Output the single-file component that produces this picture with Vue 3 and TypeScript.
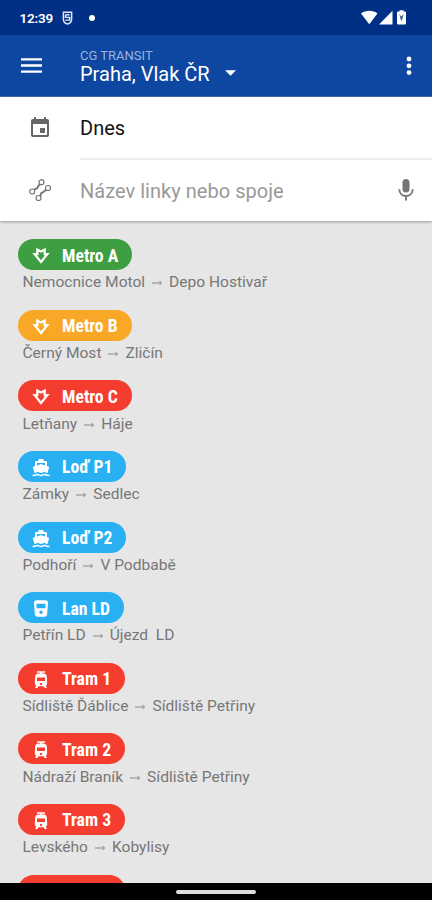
<script setup lang="ts">
type Kind = 'metro' | 'ferry' | 'cable' | 'tram'

interface Line {
  name: string
  from: string
  to: string
  kind: Kind
  color: string
}

const lines: Line[] = [
  { name: 'Metro A', from: 'Nemocnice Motol', to: 'Depo Hostivař', kind: 'metro', color: 'green' },
  { name: 'Metro B', from: 'Černý Most', to: 'Zličín', kind: 'metro', color: 'orange' },
  { name: 'Metro C', from: 'Letňany', to: 'Háje', kind: 'metro', color: 'red' },
  { name: 'Loď P1', from: 'Zámky', to: 'Sedlec', kind: 'ferry', color: 'blue' },
  { name: 'Loď P2', from: 'Podhoří', to: 'V Podbabě', kind: 'ferry', color: 'blue' },
  { name: 'Lan LD', from: 'Petřín LD', to: 'Újezd  LD', kind: 'cable', color: 'blue' },
  { name: 'Tram 1', from: 'Sídliště Ďáblice', to: 'Sídliště Petřiny', kind: 'tram', color: 'red' },
  { name: 'Tram 2', from: 'Nádraží Braník', to: 'Sídliště Petřiny', kind: 'tram', color: 'red' },
  { name: 'Tram 3', from: 'Levského', to: 'Kobylisy', kind: 'tram', color: 'red' },
]
</script>

<template>
  <div class="screen">
    <div class="status">
      <span class="clock">12:39</span>
      <svg class="shield" viewBox="0 0 12 15">
        <path d="M1.500 1.200h9v7.600c0 3-2 4.600-4.500 5.200-2.500-.6-4.500-2.200-4.500-5.200z M3.800 4h4.500M3.800 4v2.800h4.500v3H3.600" />
      </svg>
      <span class="dot"></span>
      <svg class="signals" viewBox="0 0 46 16">
        <path d="M0 3.500C4.500-.2 12-.2 16.500 3.500L8.250 14.200z" />
        <path d="M31.500 .8v13.700H18z" />
        <path d="M37 1.500h1.500V.3h4v1.200H44q1 0 1 1v11q0 1-1 1h-7q-1 0-1-1v-11q0-1 1-1z" />
        <path class="bolt" d="M38.300 4l2 2.500L42.600 4l-1.600 6.500h-1z" />
      </svg>
    </div>

    <header class="toolbar">
      <svg class="menu" viewBox="0 0 21 15"><path d="M0 1.400h21M0 7.500h21M0 13.600h21" /></svg>
      <div class="titles">
        <div class="app-name">CG TRANSIT</div>
        <div class="region">
          <span>Praha, Vlak ČR</span>
          <svg class="caret" viewBox="0 0 12 6"><path d="M0 0h12L6 6z" /></svg>
        </div>
      </div>
      <svg class="more" viewBox="0 0 6 20">
        <circle cx="3" cy="3" r="2.400" /><circle cx="3" cy="9.800" r="2.400" /><circle cx="3" cy="16.600" r="2.400" />
      </svg>
    </header>

    <section class="search">
      <div class="field">
        <svg class="field-icon" viewBox="0 0 24 24">
          <path fill="#666" d="M17 12h-5v5h5zM16 1v2H8V1H6v2H5a2 2 0 0 0-2 2v14a2 2 0 0 0 2 2h14a2 2 0 0 0 2-2V5a2 2 0 0 0-2-2h-1V1zm3 18H5V8h14z" />
        </svg>
        <span class="value">Dnes</span>
      </div>
      <div class="field">
        <svg class="field-icon" viewBox="0 0 24 24">
          <g fill="none" stroke="#777" stroke-width="1.200">
            <circle cx="4.200" cy="13.500" r="2.500" /><circle cx="13.500" cy="4.200" r="2.500" />
            <circle cx="10.500" cy="20" r="2.500" /><circle cx="20" cy="10" r="2.500" />
            <path stroke-width="2" d="M6 11.700L9 10.300L10.500 7.800L11.900 6M12.200 18.200L13.300 15.200L16 13.500L18.200 11.800" />
          </g>
        </svg>
        <span class="hint">Název linky nebo spoje</span>
        <svg class="mic" viewBox="0 0 16 22">
          <rect x="4.500" y="0" width="7" height="13.500" rx="3.500" fill="#757575" />
          <path d="M1.300 10.200c0 9 13.400 9 13.400 0M8 17v4.500" fill="none" stroke="#757575" stroke-width="1.900" />
        </svg>
      </div>
    </section>

    <main class="list">
      <div v-for="line in lines" :key="line.name" class="row">
        <div class="pill" :class="[line.color, line.kind]">
          <svg v-if="line.kind === 'metro'" class="glyph" viewBox="0 0 18 18">
            <path d="M4.200 .8L9 3.200 13.800 .8V6H17.700L9 16.700 .3 6H4.200zM6.500 4.500V8.200H5L9 13.200 13 8.200H11.500V4.500L9 5.800z" fill="#fff" fill-rule="evenodd" />
          </svg>
          <svg v-else-if="line.kind === 'ferry'" class="glyph" viewBox="0 0 18 18">
            <path d="M6.500 0h5v2H14q1 0 1 1v4l2.200 1-1.700 6q-1.500 0-3-1.200Q9 15 5.500 12.800 4 14 2.500 14L.8 8 3 7V3q0-1 1-1h2.500zM5 4v2.400L9 5l4 1.400V4z" fill="#fff" fill-rule="evenodd" />
            <path d="M.5 16.600q2.500 0 5-1.200 3.500 2 7 0 2.500 1.200 5 1.200" fill="none" stroke="#fff" stroke-width="1.500" />
          </svg>
          <svg v-else-if="line.kind === 'cable'" class="glyph" viewBox="0 0 18 18">
            <path d="M4.500 .3h9q2.500 0 2.500 2.500L15.200 13.800q-.2 3-3 3H5.800q-2.800 0-3-3L2 2.800Q2 .3 4.500 .3zM4.500 3.800v4.500h9V3.800zM9 10.500a1.700 1.700 0 1 0 .01 0z" fill="#fff" fill-rule="evenodd" />
          </svg>
          <svg v-else class="glyph" viewBox="0 0 18 18">
            <path d="M5 .9h8M9 1v3" stroke="#fff" stroke-width="1.500" />
            <path d="M6.500 2.600h5q3 0 3.300 2.900l.4 6.500q0 2-1.500 2.700l1.300 2.300h-2.300L11.600 15.200H6.400L5.300 17H3L4.300 14.700q-1.500-.7-1.500-2.700L3.200 5.500q.3-2.900 3.300-2.900zM5 6.500V10h8V6.500zM9 11.800a1.200 1.200 0 1 0 .01 0z" fill="#fff" fill-rule="evenodd" />
          </svg>
          <span class="line-name">{{ line.name }}</span>
        </div>
        <div class="route">
          <span>{{ line.from }}</span>
          <svg class="arrow" viewBox="0 0 11 6"><path d="M0 3h9.500M7.500 1l2 2-2 2" /></svg>
          <span>{{ line.to }}</span>
        </div>
      </div>
      <div class="pill tram red"></div>
    </main>

    <footer class="navbar"><span class="handle"></span></footer>
  </div>
</template>

<style>
body {
  margin: 0;
}
</style>

<style scoped>
.screen {
  display: flex;
  flex-direction: column;
  width: 432px;
  height: 900px;
  overflow: hidden;
  background: #e6e6e6;
  font-family: Roboto, "Noto Sans", sans-serif;
}
svg {
  display: block;
  flex: none;
}
.status {
  display: flex;
  align-items: center;
  flex: none;
  box-sizing: border-box;
  height: 35px;
  padding: 0 25px 0 19.500px;
  background: #002f86;
  color: #fff;
}
.clock {
  width: 42.500px;
  font-size: 13.500px;
  font-weight: 600;
  letter-spacing: -0.2px;
}
.shield {
  width: 11px;
  height: 14px;
  margin-top: 1px;
  fill: none;
  stroke: #dfe6f7;
  stroke-width: 1.6;
}
.dot {
  width: 6px;
  height: 6px;
  margin-left: 16px;
  border-radius: 50%;
  background: #fff;
}
.signals {
  width: 46px;
  height: 16px;
  margin-left: auto;
  fill: #fff;
}
.signals .bolt {
  fill: #466080;
}
.toolbar {
  display: flex;
  flex: none;
  box-sizing: border-box;
  height: 62px;
  padding: 0 20px 0 21px;
  background: #0d47a1;
  border-bottom: 1px solid #4267b8;
  color: #fff;
}
.menu {
  width: 21px;
  height: 15px;
  margin-top: 23px;
  stroke: #fff;
  stroke-width: 2.4;
}
.titles {
  flex: 1;
  padding: 13px 0 0 38px;
}
.app-name {
  color: #9db3dc;
  font-size: 13px;
  line-height: 15px;
}
.region {
  display: flex;
  align-items: center;
  gap: 15px;
  font-size: 20px;
  line-height: 22px;
}
.caret {
  width: 11px;
  height: 6px;
  margin-top: -2px;
  fill: #fff;
}
.more {
  width: 6px;
  height: 20px;
  margin-top: 21px;
  fill: #fff;
}
.search {
  flex: none;
  height: 124px;
  background: #fff;
  box-shadow: 0 1px 3px #0005;
}
.field {
  display: flex;
  align-items: center;
  height: 62px;
  padding: 0 18px 0 28px;
  font-size: 20px;
}
.field-icon {
  width: 24px;
  height: 24px;
}
.value,
.hint {
  display: flex;
  align-items: center;
  flex: 1;
  box-sizing: border-box;
  height: 63px;
  margin-left: 28px;
  padding-top: 2px;
}
.value {
  margin-right: -18px;
  border-bottom: 2px solid #eee;
  padding-top: 1px;
  color: #111;
}
.hint {
  color: #999;
  letter-spacing: 0.03px;
}
.mic {
  width: 16px;
  height: 22px;
}
.list {
  flex: 1;
  min-height: 0;
  overflow: hidden;
  padding: 18.300px 0 0 18px;
}
.row {
  height: 70.600px;
}
.pill {
  display: flex;
  align-items: center;
  box-sizing: border-box;
  width: 113.500px;
  height: 31px;
  padding-left: 14px;
  border-radius: 16px;
  color: #fff;
}
.pill.ferry {
  width: 108px;
}
.pill.cable {
  width: 105.500px;
}
.pill.tram {
  width: 107px;
}
.green {
  background: #3d9f42;
}
.orange {
  background: #f9a726;
}
.red {
  background: #f53d2f;
}
.blue {
  background: #29b0f3;
}
.glyph {
  width: 18px;
  height: 18px;
  margin-top: 3px;
}
.line-name {
  margin-left: 12px;
  padding-top: 1.500px;
  font-family: "Roboto Condensed", Roboto, sans-serif;
  font-size: 17.700px;
  font-weight: 700;
  font-stretch: 75%;
  line-height: 20px;
  white-space: nowrap;
}
.route {
  display: flex;
  align-items: center;
  margin-left: 4.500px;
  padding-top: 2.200px;
  color: #777;
  font-size: 15.550px;
  line-height: 20px;
  white-space: pre;
}
.arrow {
  width: 11px;
  height: 6px;
  margin: 2px 6px 0 7px;
  fill: none;
  stroke: #888;
  stroke-width: 1;
}
.navbar {
  display: flex;
  justify-content: center;
  flex: none;
  height: 17px;
  background: #000;
}
.handle {
  width: 80px;
  height: 4px;
  margin-top: 7px;
  border-radius: 2px;
  background: #ddd;
}
</style>
